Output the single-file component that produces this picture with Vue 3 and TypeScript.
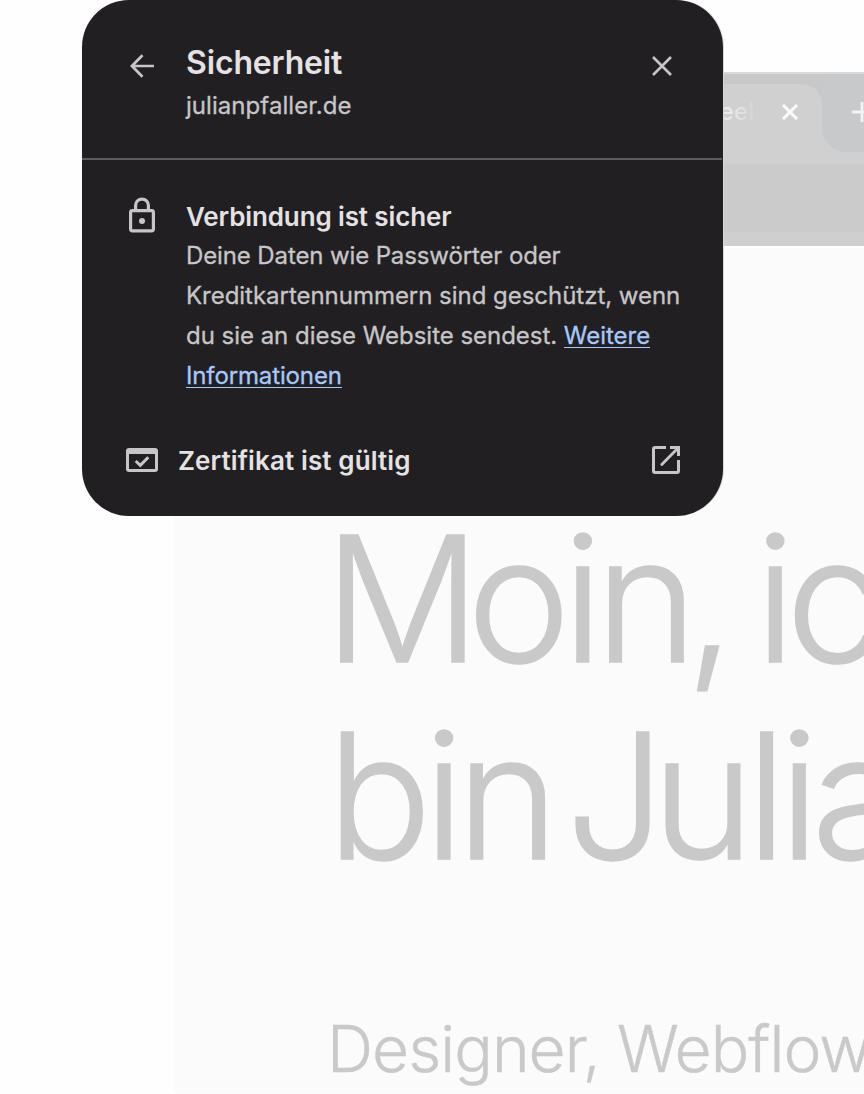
<script setup lang="ts">
const site: string = 'julianpfaller.de'
const bodyLines: string[] = ['Deine Daten wie Passwörter oder', 'Kreditkartennummern sind geschützt, wenn']
</script>

<template>
  <main class="scene">
    <section class="browser">
      <header class="tabstrip">
        <div class="tab">
          <span class="tab-title">Freela</span>
          <svg class="tab-close" viewBox="0 0 18 18"><path d="M2 2L16 16M16 2L2 16" /></svg>
        </div>
        <div class="tab-rest">
          <svg class="plus" viewBox="0 0 20 20"><path d="M0 10H20M10 0V20" /></svg>
        </div>
      </header>
      <div class="toolbar"></div>
      <div class="toolbar-edge"></div>
      <article class="page">
        <h1 class="headline">
          <span class="row l1"><span class="cap-m">M</span>oi<span class="end-n">n</span>,<span class="gap-a">{{ ' ' }}</span><span class="mid-i">i</span>ch</span>
          <span class="row l2">bin<span class="gap-b">{{ ' ' }}</span><span class="cap-j">J</span>ulian</span>
        </h1>
        <p class="tagline">Designer, Webflow</p>
      </article>
    </section>

    <aside class="dialog">
      <header class="dialog-head">
        <svg class="back" viewBox="0 0 24 24"><path d="M24 12H2M12.5 1.3L1.9 12L12.5 22.7" /></svg>
        <div class="titles">
          <h2>Sicherheit</h2>
          <p class="site">{{ site }}</p>
        </div>
        <svg class="close" viewBox="0 0 20 20"><path d="M1 1L19 19M19 1L1 19" /></svg>
      </header>
      <div class="connection">
        <svg class="lock" viewBox="0 0 26 36">
          <path d="M6.6 13.5V8.5A6.4 6.4 0 0 1 19.4 8.5V13.5" />
          <rect x="1.6" y="13.6" width="22.8" height="20.2" rx="1.8" />
          <circle cx="13" cy="24" r="3" />
        </svg>
        <div class="copy">
          <h3>Verbindung ist sicher</h3>
          <p class="line line1">{{ bodyLines[0] }}</p>
          <p class="line line2">{{ bodyLines[1] }}</p>
          <p class="line line3">du sie an diese Website sendest. <a>Weitere</a></p>
          <p class="line line4"><a>Informationen</a></p>
        </div>
      </div>
      <div class="certificate">
        <svg class="cert" viewBox="0 0 32 24">
          <rect x="1.5" y="1.5" width="29" height="21" rx="1.5" />
          <path class="bar" d="M1 1H31V6H1Z" />
          <path d="M9.7 13L14.3 17.3L22.3 9.3" />
        </svg>
        <span class="cert-text">Zertifikat ist gültig</span>
        <svg class="external" viewBox="0 0 28 28">
          <path d="M14 1.5H3Q1.5 1.5 1.5 3V25Q1.5 26.5 3 26.5H25Q26.5 26.5 26.5 25V14M18 1.5H26.5V10" />
          <path class="shaft" d="M9.8 18.4L26 2" />
        </svg>
      </div>
    </aside>
  </main>
</template>

<style>
body {
  margin: 0;
  background: #fff;
}
</style>

<style scoped>
.scene {
  position: relative;
  width: 864px;
  height: 1094px;
  overflow: hidden;
  box-sizing: border-box;
  padding: 72px 0 0 174px;
  background: #fefefe;
  font-family: Inter, "Liberation Sans", sans-serif;
}
h1, h2, h3, p {
  margin: 0;
  font-weight: inherit;
}
svg {
  display: block;
  flex: none;
  fill: none;
  stroke: #c7c5c8;
}
.browser {
  width: 690px;
  height: 1021px;
  overflow: hidden;
}
.tabstrip {
  display: flex;
  height: 92px;
  box-sizing: border-box;
  border-top: 2px solid #dadada;
  background: #d0d0d0;
}
.tab {
  display: flex;
  flex: none;
  box-sizing: border-box;
  width: 648px;
  padding: 10px 0 0;
  background: linear-gradient(#c8c8c8 40px, #d0d0d0 40px);
  position: relative;
}
.tab::before {
  content: "";
  position: absolute;
  inset: 10px 0 0;
  background: #d0d0d0;
  border-radius: 0 20px 0 0;
}
.tab-title {
  position: relative;
  flex: none;
  width: 584px;
  box-sizing: border-box;
  padding-left: 523px;
  margin-top: 14px;
  font-size: 24px;
  font-weight: 500;
  line-height: 28px;
  letter-spacing: 0.2px;
  white-space: nowrap;
  color: transparent;
  background: linear-gradient(90deg, #ebebeb 556px, #d0d0d0 584px);
  background-clip: text;
}
.tab-close {
  position: relative;
  width: 18px;
  height: 18px;
  margin: 19px 0 0 23px;
  stroke: #fbfbfb;
  stroke-width: 3;
}
.tab-rest {
  flex: none;
  box-sizing: border-box;
  width: 120px;
  height: 78px;
  background: #c7c9cb;
  border-radius: 0 0 0 24px;
  padding: 28px 0 0 30px;
}
.plus {
  width: 20px;
  height: 20px;
  stroke: #f4f4f4;
  stroke-width: 2.8;
}
.toolbar {
  height: 68px;
  background: #cbcbcb;
}
.toolbar-edge {
  height: 14px;
  background: #cfcfcf;
}
.page {
  box-sizing: border-box;
  height: 847px;
  padding: 252px 0 0 153px;
  border-top: 2px solid #fff;
  background: #fbfbfb;
  color: #c9c9c9;
  white-space: nowrap;
}
.headline {
  font-size: 174px;
  line-height: 197px;
  font-weight: 300;
  letter-spacing: -7.9px;
  -webkit-text-stroke: 1.5px #c9c9c9;
}
.row {
  display: block;
}
.l1 {
  margin-left: -3px;
}
.cap-m {
  letter-spacing: -13.5px;
}
.end-n {
  letter-spacing: -11.8px;
}
.gap-a {
  letter-spacing: -21px;
}
.mid-i {
  letter-spacing: -9.5px;
}
.gap-b {
  letter-spacing: -34px;
}
.cap-j {
  letter-spacing: -13px;
}
.tagline {
  margin-top: 115px;
  font-size: 64px;
  line-height: 80px;
  font-weight: 300;
  letter-spacing: -0.95px;
  -webkit-text-stroke: 0.4px #c9c9c9;
}
.dialog {
  position: absolute;
  left: 82px;
  top: 0;
  width: 641px;
  height: 516px;
  border-radius: 47px;
  background: #211f22;
  color: #c7c5c8;
  box-shadow: 1px 0 0 #d8d8d8;
  overflow: hidden;
}
.dialog-head {
  display: flex;
  box-sizing: border-box;
  height: 160px;
  margin-right: 1px;
  padding: 0 50px 0 48px;
  border-bottom: 2px solid #5e5c5f;
}
.back {
  width: 24px;
  height: 24px;
  margin-top: 54px;
  stroke-width: 2.7;
}
.titles {
  flex: 1;
  padding: 43px 0 0 32px;
}
h2 {
  font-size: 32px;
  line-height: 40px;
  font-weight: 600;
  letter-spacing: -0.15px;
  color: #e5e2e5;
}
.site {
  margin-top: 7px;
  font-size: 24px;
  line-height: 32px;
  letter-spacing: 0.05px;
  -webkit-text-stroke: 0.3px;
}
.close {
  width: 20px;
  height: 20px;
  margin-top: 56px;
  stroke-width: 2.6;
}
.connection {
  display: flex;
  height: 284px;
  box-sizing: border-box;
  padding: 37px 0 0 47px;
}
.lock {
  width: 26px;
  height: 36px;
  stroke-width: 3.2;
}
.lock circle {
  fill: #c7c5c8;
  stroke: none;
}
.copy {
  padding-left: 31px;
  white-space: nowrap;
}
h3 {
  font-size: 26px;
  line-height: 40px;
  font-weight: 600;
  letter-spacing: -0.12px;
  color: #e5e2e5;
}
.line {
  height: 40px;
  font-size: 24px;
  line-height: 40px;
  letter-spacing: -0.03px;
  -webkit-text-stroke: 0.3px;
}
.line1 {
  margin-top: -1px;
  letter-spacing: -0.12px;
}
.line4 {
  letter-spacing: -0.13px;
}
.line a {
  color: #a8c7fa;
  display: inline-block;
  line-height: 22px;
  border-bottom: 1px solid #a8c7fa;
}
.certificate {
  display: flex;
  padding: 2px 43px 0 44px;
}
.cert {
  width: 32px;
  height: 24px;
  margin-top: 2px;
  stroke-width: 3;
}
.cert .bar {
  fill: #c7c5c8;
  stroke: none;
}
.cert-text {
  flex: 1;
  padding-left: 20px;
  font-size: 26px;
  line-height: 30px;
  font-weight: 600;
  letter-spacing: 0.12px;
  color: #e5e2e5;
}
.external {
  width: 28px;
  height: 28px;
  stroke-width: 3;
}
.external .shaft {
  stroke-linecap: round;
  stroke-width: 2.8;
}
</style>
